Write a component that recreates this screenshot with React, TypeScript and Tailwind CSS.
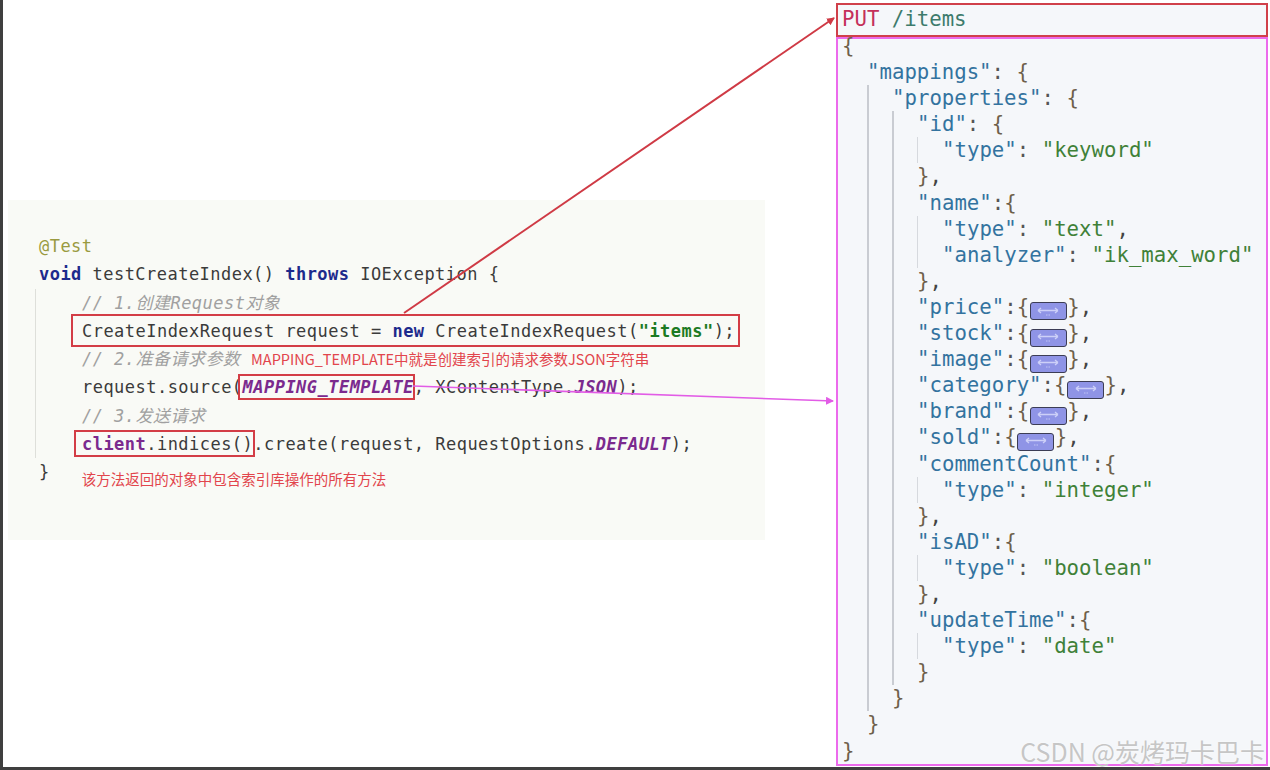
import type { ReactNode } from "react";

const codeFont = {
  fontFamily: '"DejaVu Sans Mono", "Noto Sans CJK SC", monospace',
};
const cjkFont = {
  fontFamily: '"Noto Sans CJK SC", "Liberation Sans", sans-serif',
};

const kw = "font-bold text-[#1d2a8c]";
const cst = "font-bold italic text-[#7b2a8e]";
const cmt = "italic text-[#a0a0a0]";

function Box({ children, cls }: { children: ReactNode; cls: string }) {
  return (
    <span className="relative">
      <span className={`pointer-events-none absolute border-2 border-[#d33d46] ${cls}`} />
      {children}
    </span>
  );
}

function CodePanel() {
  return (
    <div
      className="mt-[200px] ml-[5px] h-[340px] w-[757px] bg-[#f9faf6] pt-[32px] pl-[31px] text-[17px] leading-[28.25px] tracking-[0.47px] text-[#3b3b3b]"
      style={codeFont}
    >
      <div className="whitespace-pre text-[#9a9a40]">@Test</div>
      <div className="whitespace-pre">
        <span className={kw}>void</span> testCreateIndex() <span className={kw}>throws</span> IOException {"{"}
      </div>
      <div className="ml-[-4px] border-l border-[#dedfda] pl-[46px]">
        <div className={`whitespace-pre ${cmt}`}>// 1.创建Request对象</div>
        <div className="whitespace-pre">
          <Box cls="-left-[11px] -right-[5px] -top-[7px] -bottom-[6px]">
            CreateIndexRequest request = <span className={kw}>new</span> CreateIndexRequest(
            <span className="font-bold text-[#1c7a22]">"items"</span>);
          </Box>
        </div>
        <div className="whitespace-pre">
          <span className={cmt}>// 2.准备请求参数</span>{" "}
          <span className="text-[14.5px] tracking-normal text-[#e2454c]" style={cjkFont}>
            MAPPING_TEMPLATE中就是创建索引的请求参数JSON字符串
          </span>
        </div>
        <div className="whitespace-pre">
          request.source(
          <Box cls="-left-[5px] -right-[1px] -top-[3px] -bottom-[3px]">
            <span className={cst}>MAPPING_TEMPLATE</span>
          </Box>
          , XContentType.<span className={cst}>JSON</span>);
        </div>
        <div className={`whitespace-pre ${cmt}`}>// 3.发送请求</div>
        <div className="whitespace-pre">
          <Box cls="-left-[8px] -right-[2px] -top-[4px] -bottom-[3px]">
            <span className="font-bold text-[#7b2a8e]">client</span>.indices()
          </Box>
          .create(request, RequestOptions.<span className={cst}>DEFAULT</span>);
        </div>
      </div>
      <div className="whitespace-pre">
        {"}"}
        {"   "}
        <span className="align-[-7px] text-[14.5px] tracking-normal text-[#e2454c]" style={cjkFont}>
          该方法返回的对象中包含索引库操作的所有方法
        </span>
      </div>
    </div>
  );
}

const K = ({ t }: { t: string }) => <span className="text-[#33739f]">"{t}"</span>;
const S = ({ t }: { t: string }) => <span className="text-[#3f8138]">"{t}"</span>;
const P = ({ t }: { t: string }) => <span className="text-[#6e604a]">{t}</span>;
const C = ({ sp }: { sp?: boolean }) => <span className="text-[#555]">{sp ? ": " : ":"}</span>;
const Cm = () => <span className="text-[#444]">,</span>;

function Line({ children }: { children: ReactNode }) {
  return <div className="h-[26.1px] whitespace-pre leading-[26.1px]">{children}</div>;
}

function Guide({ children, light }: { children: ReactNode; light?: boolean }) {
  return (
    <div
      className={
        light
          ? "border-l border-[#d6d9de] pl-[24px]"
          : "border-l-2 border-[#c9ccd2] pl-[23px]"
      }
    >
      {children}
    </div>
  );
}

function Badge() {
  return (
    <span className="mx-[0.5px] inline-flex h-[18px] w-[37px] items-center justify-center rounded-[3px] border-[1.5px] border-[#3c3d55] bg-[#8f94e6] align-[-3px]">
      <svg width="26" height="11" viewBox="0 0 26 11">
        <path d="M3 4.5h20M3 4.5l3-2.5M3 4.5l3 2.5M23 4.5l-3-2.5M23 4.5l-3 2.5" stroke="#cdd0f8" strokeWidth="1.3" fill="none" />
        <path d="M11 9h1M12.5 9h1M14 9h1" stroke="#cdd0f8" strokeWidth="0.8" />
      </svg>
    </span>
  );
}

function Folded({ k, comma = true }: { k: string; comma?: boolean }) {
  return (
    <Line>
      <K t={k} />
      <C />
      <P t="{" />
      <Badge />
      <P t="}" />
      {comma && <Cm />}
    </Line>
  );
}

function TypeObj({ k, v, sp, comma = true }: { k: string; v: string; sp?: boolean; comma?: boolean }) {
  return (
    <>
      <Line>
        <K t={k} />
        <C sp={sp} />
        <P t="{" />
      </Line>
      <Guide light>
        <Line>
          <K t="type" />
          <C sp />
          <S t={v} />
        </Line>
      </Guide>
      <Line>
        <P t="}" />
        {comma && <Cm />}
      </Line>
    </>
  );
}

function JsonPanel() {
  return (
    <div className="flex w-[432px] flex-col pt-[3px]" style={codeFont}>
      <div className="flex h-[34px] items-center border-2 border-[#d0404a] bg-[#f5f7fa] px-[4px] text-[20.7px]">
        <span className="text-[#c4305a]">PUT</span>
        <span className="whitespace-pre text-[#3d7b6c]"> /items</span>
      </div>
      <div className="h-[729px] border-2 border-[#ec6aec] bg-[#f5f7fa] pl-[4px] text-[20.7px]">
        <div className="-mt-[6px]">
          <Line>
            <P t="{" />
          </Line>
          <div className="pl-[25px]">
            <Line>
              <K t="mappings" />
              <C sp />
              <P t="{" />
            </Line>
            <Guide>
              <Line>
                <K t="properties" />
                <C sp />
                <P t="{" />
              </Line>
              <Guide>
                <TypeObj k="id" v="keyword" sp />
                <Line>
                  <K t="name" />
                  <C />
                  <P t="{" />
                </Line>
                <Guide light>
                  <Line>
                    <K t="type" />
                    <C sp />
                    <S t="text" />
                    <Cm />
                  </Line>
                  <Line>
                    <K t="analyzer" />
                    <C sp />
                    <S t="ik_max_word" />
                  </Line>
                </Guide>
                <Line>
                  <P t="}" />
                  <Cm />
                </Line>
                <Folded k="price" />
                <Folded k="stock" />
                <Folded k="image" />
                <Folded k="category" />
                <Folded k="brand" />
                <Folded k="sold" />
                <TypeObj k="commentCount" v="integer" />
                <TypeObj k="isAD" v="boolean" />
                <TypeObj k="updateTime" v="date" comma={false} />
              </Guide>
              <Line>
                <P t="}" />
              </Line>
            </Guide>
            <Line>
              <P t="}" />
            </Line>
          </div>
          <Line>
            <P t="}" />
          </Line>
        </div>
      </div>
    </div>
  );
}

export default function App() {
  return (
    <div className="relative flex h-[770px] w-[1270px] overflow-hidden border-b-[3px] border-l-[3px] border-[#3f3f3f] bg-white">
      <div className="w-[833px] shrink-0">
        <CodePanel />
      </div>
      <JsonPanel />

      <svg className="pointer-events-none absolute left-[-3px] top-0" width="1270" height="770">
        <defs>
          <marker id="ar" markerWidth="8" markerHeight="8" refX="7" refY="4" orient="auto" markerUnits="userSpaceOnUse">
            <path d="M0 0L8 4L0 8z" fill="#cf3a45" />
          </marker>
          <marker id="am" markerWidth="8" markerHeight="8" refX="7" refY="4" orient="auto" markerUnits="userSpaceOnUse">
            <path d="M0 0L8 4L0 8z" fill="#e25ce6" />
          </marker>
        </defs>
        <line x1="404" y1="313" x2="834" y2="18" stroke="#cf3a45" strokeWidth="2" markerEnd="url(#ar)" />
        <line x1="413" y1="386" x2="833" y2="401" stroke="#e25ce6" strokeWidth="1.6" markerEnd="url(#am)" />
      </svg>

      <div
        className="pointer-events-none absolute bottom-[3px] right-[5px] text-[25px] leading-none text-[#c6c6c6] [text-shadow:0_0_2px_#ffffff]"
        style={cjkFont}
      >
        CSDN @炭烤玛卡巴卡
      </div>
    </div>
  );
}
